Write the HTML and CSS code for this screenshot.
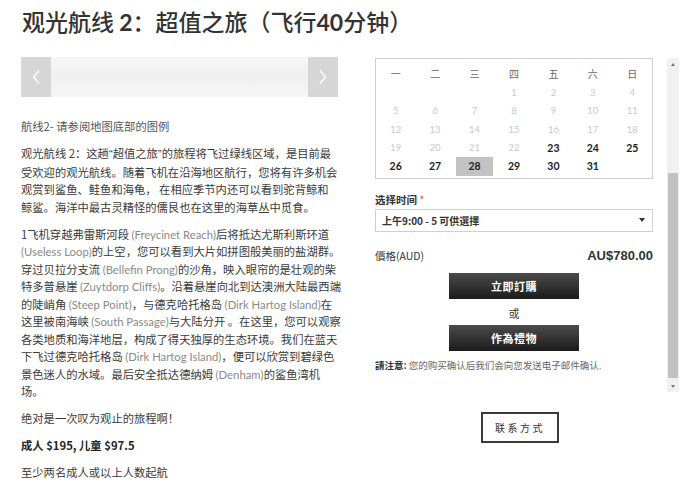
FILE: index.html
```html
<!DOCTYPE html>
<html lang="zh">
<head>
<meta charset="utf-8">
<title>观光航线 2</title>
<link rel="stylesheet" href="styles.css">
</head>
<body>
<h1 class="title">观光航线 <span class="num">2</span>：超值之旅（飞行<span class="num">40</span>分钟）</h1>
<div class="main">
  <div class="left">
    <div class="carousel">
      <div class="car-btn">
        <svg width="10" height="16" viewBox="0 0 10 16"><path d="M8 1.5 L2.5 8 L8 14.5" fill="none" stroke="#fff" stroke-width="1.4"/></svg>
      </div>
      <div class="car-track"></div>
      <div class="car-btn">
        <svg width="10" height="16" viewBox="0 0 10 16"><path d="M2 1.5 L7.5 8 L2 14.5" fill="none" stroke="#fff" stroke-width="1.4"/></svg>
      </div>
    </div>
    <p class="legend">航线2- 请参阅地图底部的图例</p>
    <p>观光航线 2：这趟<span class="q">“</span>超值之旅<span class="q">”</span>的旅程将飞过绿线区域，是目前最<br>受欢迎的观光航线。随着飞机在沿海地区航行，您将有许多机会<br>观赏到鲨鱼、鲑鱼和海龟， 在相应季节内还可以看到驼背鲸和<br>鲸鲨。海洋中最古灵精怪的儒艮也在这里的海草丛中觅食。</p>
    <p>1飞机穿越弗雷斯河段 <span class="en">(Freycinet Reach)</span>后将抵达尤斯利斯环道<br><span class="en">(Useless Loop)</span>的上空，您可以看到大片如拼图般美丽的盐湖群。<br>穿过贝拉分支流 <span class="en">(Bellefin Prong)</span>的沙角，映入眼帘的是壮观的柴<br>特多普悬崖 <span class="en">(Zuytdorp Cliffs)</span>。沿着悬崖向北到达澳洲大陆最西端<br>的陡峭角 <span class="en">(Steep Point)</span>，与德克哈托格岛 <span class="en">(Dirk Hartog Island)</span>在<br>这里被南海峡 <span class="en">(South Passage)</span>与大陆分开 。在这里，您可以观察<br>各类地质和海洋地层，构成了得天独厚的生态环境。我们在蓝天<br>下飞过德克哈托格岛 <span class="en">(Dirk Hartog Island)</span>，便可以欣赏到碧绿色<br>景色迷人的水域。最后安全抵达德纳姆 <span class="en">(Denham)</span>的鲨鱼湾机<br>场。</p>
    <p>绝对是一次叹为观止的旅程啊！</p>
    <p class="strong">成人 $195, 儿童 $97.5</p>
    <p>至少两名成人或以上人数起航</p>
  </div>
  <div class="right">
    <div class="panel">
      <div class="panel-content">
        <div class="cal">
          <div class="wd">一</div><div class="wd">二</div><div class="wd">三</div><div class="wd">四</div><div class="wd">五</div><div class="wd">六</div><div class="wd">日</div>
          <div></div><div></div><div></div><div class="off">1</div><div class="off">2</div><div class="off">3</div><div class="off">4</div>
          <div class="off">5</div><div class="off">6</div><div class="off">7</div><div class="off">8</div><div class="off">9</div><div class="off">10</div><div class="off">11</div>
          <div class="off">12</div><div class="off">13</div><div class="off">14</div><div class="off">15</div><div class="off">16</div><div class="off">17</div><div class="off">18</div>
          <div class="off">19</div><div class="off">20</div><div class="off">21</div><div class="off">22</div><div class="on">23</div><div class="on">24</div><div class="on">25</div>
          <div class="on">26</div><div class="on">27</div><div class="on sel">28</div><div class="on">29</div><div class="on">30</div><div class="on">31</div><div></div>
        </div>
        <div class="field-label">选择时间 <span class="req">*</span></div>
        <div class="select"><span>上午9:00 - 5 可供選擇</span><span class="caret"></span></div>
        <div class="price-row"><span>價格(AUD)</span><span class="price">AU$780.00</span></div>
        <div class="btn">立即訂購</div>
        <div class="or">或</div>
        <div class="btn">作為禮物</div>
        <p class="note"><b>請注意:</b> 您的购买确认后我们会向您发送电子邮件确认.</p>
      </div>
      <div class="scrollbar">
        <div class="sb-arrow"><span class="tri-up"></span></div>
        <div class="sb-track"><div class="sb-thumb"></div></div>
        <div class="sb-arrow"><span class="tri-down"></span></div>
      </div>
    </div>
    <div class="contact">联系方式</div>
  </div>
</div>
</body>
</html>
```
FILE: styles.css
```css
html, body {
  margin: 0;
  padding: 0;
  overflow: hidden;
  background: #fff;
}
body {
  font-family: "Noto Sans CJK SC", "Noto Sans", sans-serif;
  color: #333;
  width: 680px;
  height: 490px;
}
.title {
  margin: 0;
  box-sizing: border-box;
  height: 50px;
  padding: 7px 0 0 22px;
  font-size: 23px;
  line-height: 28px;
  font-weight: 500;
  color: #333;
  white-space: nowrap;
}
.title .num {
  font-family: "Lato", "Noto Sans", sans-serif;
  font-weight: 700;
}
.main {
  display: flex;
}
.left {
  width: 360px;
  box-sizing: border-box;
  padding: 7px 0 0 21px;
}
.carousel {
  display: flex;
  width: 317px;
  height: 40px;
}
.car-btn {
  width: 30px;
  background: #d6d6d6;
  display: flex;
  align-items: center;
  justify-content: center;
}
.car-track {
  flex: 1;
  background: linear-gradient(#f7f7f7, #f0f0f0 50%, #f6f6f6);
}
.left p {
  margin: 0 0 9.5px;
  font-size: 11.3px;
  line-height: 17.5px;
  color: #3a3a3a;
  white-space: nowrap;
}
.left p.legend {
  margin-top: 21px;
  color: #555;
}
.left .en {
  font-family: "Lato", "Open Sans", sans-serif;
  color: #8a8a8a;
}
.left .q {
  font-family: "Liberation Sans", sans-serif;
}
.left p.strong {
  font-weight: 700;
  color: #222;
}
.right {
  width: 320px;
}
.panel {
  display: flex;
  margin-top: 8px;
  height: 334px;
  overflow: hidden;
}
.panel-content {
  width: 278px;
  margin-left: 15px;
}
.cal {
  box-sizing: border-box;
  border: 1px solid #cfcfcf;
  padding: 4px 0 2px;
  display: grid;
  grid-template-columns: repeat(7, 1fr);
  grid-template-rows: 20px repeat(5, 18.5px);
  font-family: "Lato", "Noto Sans", sans-serif;
}
.cal > div {
  display: flex;
  align-items: center;
  justify-content: center;
}
.cal .wd {
  font-family: "Noto Sans CJK SC", sans-serif;
  font-size: 10px;
  color: #666;
}
.cal .off {
  font-size: 9.5px;
  color: #c9c9c9;
}
.cal .on {
  font-size: 10.5px;
  font-weight: 700;
  color: #222;
}
.cal .sel {
  background: #c3c3c3;
  margin: 0 1px;
}
.field-label {
  margin-top: 14px;
  font-size: 10.5px;
  line-height: 14px;
  font-weight: 700;
  color: #333;
}
.req {
  color: #d9534f;
  font-weight: 400;
}
.select {
  margin-top: 2px;
  box-sizing: border-box;
  height: 23px;
  border: 1px solid #cfcfcf;
  padding: 0 7px 0 6px;
  display: flex;
  align-items: center;
  justify-content: space-between;
  font-size: 10px;
  font-weight: 700;
  color: #333;
}
.caret {
  width: 0;
  height: 0;
  border-left: 3px solid transparent;
  border-right: 3px solid transparent;
  border-top: 4px solid #333;
}
.price-row {
  margin-top: 16px;
  display: flex;
  justify-content: space-between;
  align-items: center;
  font-size: 10.5px;
  line-height: 16px;
  color: #333;
}
.price {
  font-family: "Liberation Sans", "Noto Sans", sans-serif;
  font-size: 13px;
  font-weight: 700;
  color: #333;
}
.btn {
  width: 130px;
  height: 26px;
  margin: 9px auto 0;
  background: linear-gradient(#4b4b4b, #1b1b1b);
  color: #fff;
  font-size: 11px;
  font-weight: 700;
  display: flex;
  align-items: center;
  justify-content: center;
  letter-spacing: 0.5px;
}
.or {
  margin-top: 7px;
  text-align: center;
  font-size: 11px;
  line-height: 14px;
  color: #333;
}
.or + .btn {
  margin-top: 5px;
}
.note {
  margin: 8px 0 0;
  font-size: 9.5px;
  line-height: 13px;
  color: #666;
  white-space: nowrap;
}
.note b {
  color: #333;
}
.scrollbar {
  margin-left: auto;
  margin-right: 1px;
  width: 12px;
  display: flex;
  flex-direction: column;
  background: #f1f1f1;
}
.sb-arrow {
  height: 12px;
  display: flex;
  align-items: center;
  justify-content: center;
}
.sb-track {
  flex: 1;
  padding-top: 103px;
}
.sb-thumb {
  height: 205px;
  background: #c1c1c1;
  margin: 0 1px;
}
.tri-up {
  width: 0;
  height: 0;
  border-left: 2.5px solid transparent;
  border-right: 2.5px solid transparent;
  border-bottom: 3px solid #777;
}
.tri-down {
  width: 0;
  height: 0;
  border-left: 2.5px solid transparent;
  border-right: 2.5px solid transparent;
  border-top: 3px solid #777;
}
.contact {
  box-sizing: border-box;
  width: 78px;
  height: 31px;
  margin: 20px auto 0;
  border: 2px solid #3a3a3a;
  display: flex;
  align-items: center;
  justify-content: center;
  font-size: 10px;
  letter-spacing: 2.5px;
  color: #333;
}
```
